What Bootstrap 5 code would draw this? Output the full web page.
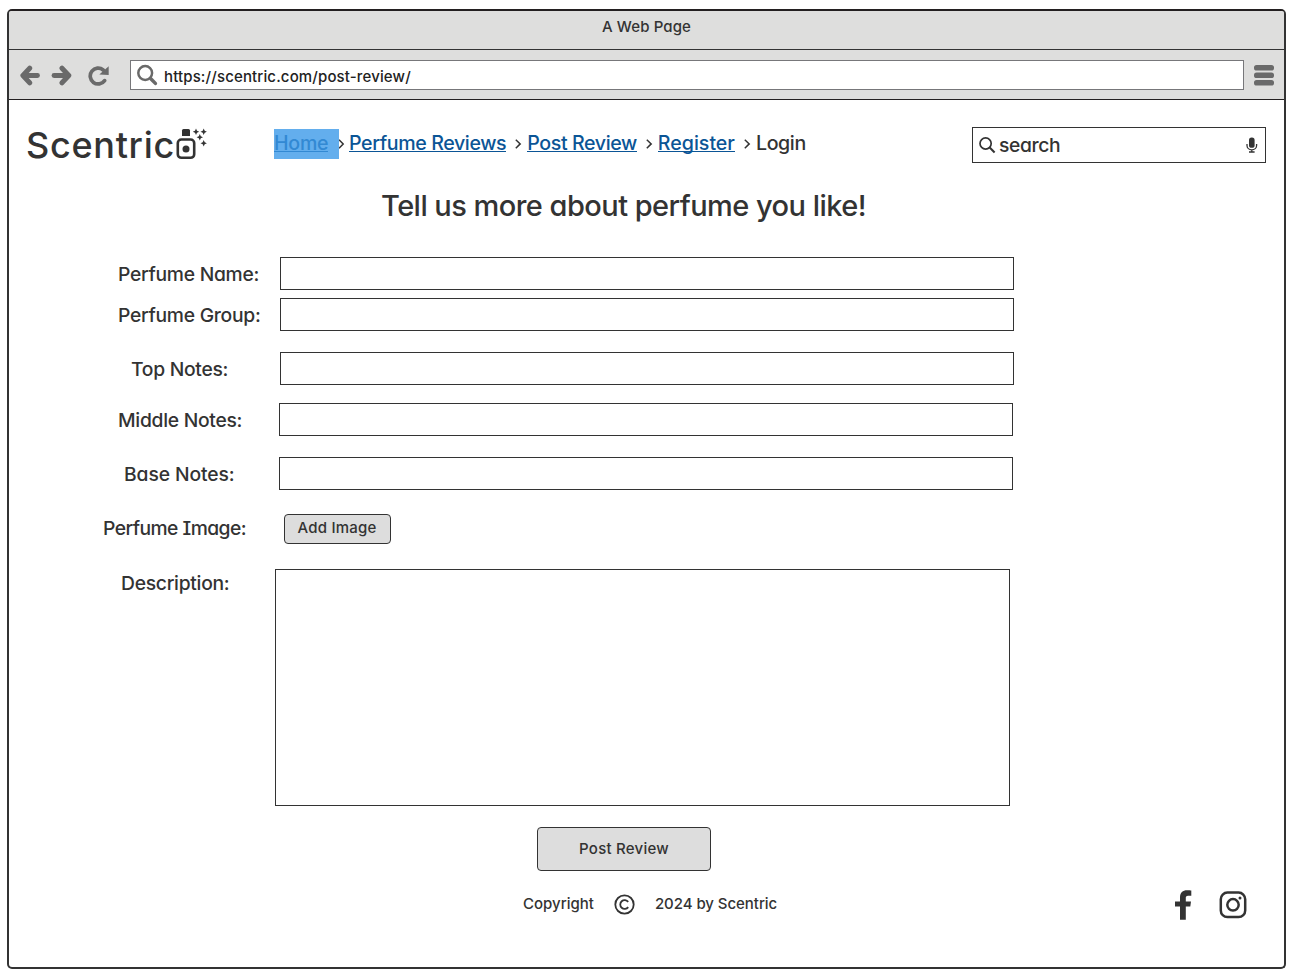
<!DOCTYPE html>
<html lang="en">
<head>
<meta charset="utf-8">
<meta name="viewport" content="width=device-width, initial-scale=1">
<title>Scentric</title>
<link href="https://cdn.jsdelivr.net/npm/bootstrap@5.3.0/dist/css/bootstrap.min.css" rel="stylesheet">
<style>
:root { --ink: #333; --frame: #231f20; --chrome: #dededd; --glyph: #6a6a6a; --blue: #0b5596; }
body { font-family: Inter, "Liberation Sans", sans-serif; font-feature-settings: "cv11", "cv08"; font-weight: 450; color: var(--ink); background: #fff; overflow: hidden; }
svg { display: block; flex: none; }
.window-frame { margin: 9px 6px 0 7px; height: 960px; border: 2px solid var(--ink); border-top-color: var(--frame); border-radius: 5px; overflow: hidden; }

/* browser chrome */
.title-bar { height: 39px; background: var(--chrome); border-bottom: 1px solid var(--ink); font-size: 15px; line-height: 31px; letter-spacing: .1px; }
.tool-bar { height: 50px; background: var(--chrome); border-bottom: 1px solid var(--frame); padding: 0 10px; color: var(--glyph); }
.tool-bar > svg { margin-top: 2px; }
.nav-next { margin-left: 11px; }
.nav-reload { margin-left: 15px; }
.address { height: 30px; border: 1px solid #77777a; margin: 0 9px 0 20px; padding-left: 5px; font-size: 15px; letter-spacing: .14px; }
.address span { margin-left: 6px; line-height: 20px; padding-top: 4px; color: #222; }

/* site header */
.site-head { height: 88px; padding: 27px 18px 0; }
.logo { width: 247px; font-size: 36px; line-height: 36px; font-weight: 500; letter-spacing: .7px; }
.logo span { width: 148px; text-indent: -1px; }
.crumbs { font-size: 19.6px; line-height: 28px; margin-top: 2px; letter-spacing: -.38px; }
.crumbs a { color: var(--blue); text-decoration: none; background: linear-gradient(var(--blue), var(--blue)) 0 22px / 100% 1px no-repeat; white-space: nowrap; }
.crumbs .picked { width: 65px; height: 30px; background: #63aeed; }
.crumbs .picked a { display: inline-block; letter-spacing: -.26px; color: #3289d3; background-image: linear-gradient(#3289d3, #3289d3); }
.chev { width: 21px; padding-left: 9px; }
.picked + .chev { width: 10px; padding-left: 0; }
.searchbox { width: 294px; height: 36px; border: 1px solid var(--ink); padding: 0 7px 0 6px; font-size: 19.3px; letter-spacing: -.35px; }
.headline { font-size: 29px; line-height: 40px; margin: -2px 0 31px 372px; letter-spacing: -.54px; font-weight: 450; }

/* review form */
.field-row label { flex: none; width: 271px; font-size: 19.3px; line-height: 34px; letter-spacing: -.28px; white-space: nowrap; }
.field { width: 734px; height: 33px; border: 1px solid var(--ink); border-radius: 0; padding: 0 8px; }
.area { width: 735px; height: 237px; resize: none; }
.soft-btn { display: block; background: #ddd; border: 1px solid var(--ink); border-radius: 4px; color: var(--ink); font-size: 15px; font-weight: 450; padding: 0; }
.row-name, .row-group, .row-top, .row-middle, .row-base { height: 33px; }
.row-name label, .row-group label { padding-left: 109px; }
.row-group { margin-top: 8px; }
.row-top { margin-top: 21px; }
.row-top label { padding-left: 122px; }
.row-middle { margin-top: 18px; }
.row-middle label { width: 270px; padding-left: 109px; }
.row-base { margin-top: 21px; }
.row-base label { width: 270px; padding-left: 115px; letter-spacing: -.1px; }
.row-image { margin-top: 24px; height: 30px; }
.row-image label { width: 275px; padding-left: 94px; line-height: 28px; letter-spacing: -.55px; }
.row-image .soft-btn { width: 107px; height: 30px; line-height: 26px; padding: 0 1px 2px 0; letter-spacing: .2px; }
.row-text { margin-top: 25px; }
.row-text label { width: 266px; padding-left: 112px; line-height: 28px; }
.post-btn { width: 174px; height: 44px; margin: 21px 0 0 528px; line-height: 41px; padding-bottom: 1px; letter-spacing: .24px; }

/* footer */
.foot { font-size: 15px; line-height: 29px; letter-spacing: 0; margin-top: 18px; padding: 0 37px 0 514px; height: 33px; }
.foot .owner { margin-left: 20px; letter-spacing: -.05px; }
.foot .copy { margin: 5px 0 0 20px; }
</style>
</head>
<body>
<div class="window-frame">
  <div class="title-bar text-center">A Web Page</div>
  <div class="tool-bar d-flex align-items-center">
    <svg width="21" height="21" viewBox="0 0 21 21" fill="none" stroke="currentColor" stroke-linecap="round" stroke-linejoin="round"><path d="M10.700 3.200 3.900 10.500l6.800 7.300" stroke-width="5"/><path d="M5.500 10.500h13" stroke-width="4.800"/></svg>
    <svg class="nav-next" width="21" height="21" viewBox="0 0 21 21" fill="none" stroke="currentColor" stroke-linecap="round" stroke-linejoin="round"><path d="m11 3.200 6.800 7.300-6.800 7.300" stroke-width="5"/><path d="M16 10.500H3" stroke-width="4.800"/></svg>
    <svg class="nav-reload" width="23" height="21" viewBox="0 0 23 21"><path d="M17.600 15.600a7.900 7.900 0 1 1-1.400-10.600" fill="none" stroke="currentColor" stroke-width="3.700" stroke-linecap="round"/><path d="M21.700 1.200v8.800l-9.400-.6z" fill="currentColor"/></svg>
    <div class="address bg-white flex-grow-1 d-flex align-items-center">
      <svg width="22" height="22" viewBox="0 0 22 22" fill="none" stroke="#6a6a6a"><circle cx="9.200" cy="9" r="6.900" stroke-width="2.500"/><path d="m14.800 14.700 4.600 4.700" stroke-width="3.500" stroke-linecap="round"/></svg>
      <span>https://scentric.com/post-review/</span>
    </div>
    <svg width="21" height="21" viewBox="0 0 21 21" fill="currentColor"><rect x="1" y="0" width="20" height="5.500" rx="2.600"/><rect x="1" y="7.500" width="20" height="5.500" rx="2.600"/><rect x="1" y="15" width="20" height="5.500" rx="2.600"/></svg>
  </div>

  <header class="site-head d-flex align-items-start">
    <div class="logo d-flex"><span>Scentric</span>
      <svg width="33" height="33" viewBox="0 0 33 33" fill="#333"><path d="M7 9V3.500Q7 2 8.500 2h5Q15 2 15 3.500V9z"/><rect x="2.800" y="12.500" width="16.400" height="18.300" rx="3.600" fill="none" stroke="#333" stroke-width="2.600"/><circle cx="11" cy="22" r="3.500"/><path id="spark" d="M21 1.600l1 2.200 2.200 1-2.200 1-1 2.200-1-2.200-2.200-1 2.200-1z"/><use href="#spark" x="7.700"/><use href="#spark" x="3.800" y="5.500"/><use href="#spark" x="7.700" y="11.500"/></svg>
    </div>
    <nav class="crumbs d-flex flex-grow-1">
      <div class="picked"><a href="#">Home</a></div>
      <span class="chev"><svg width="6" height="28" viewBox="0 0 6 28" fill="none" stroke="#333" stroke-width="1.500"><path d="m0 10.700 4.200 4.200L0 19.200"/></svg></span>
      <a href="#">Perfume Reviews</a>
      <span class="chev"><svg width="7" height="28" viewBox="0 0 7 28" fill="none" stroke="#333" stroke-width="1.500"><path d="m.8 10.700 4.400 4.200L.8 19.200"/></svg></span>
      <a href="#" style="letter-spacing:-.4px">Post Review</a>
      <span class="chev"><svg width="7" height="28" viewBox="0 0 7 28" fill="none" stroke="#333" stroke-width="1.500"><path d="m.8 10.700 4.400 4.200L.8 19.200"/></svg></span>
      <a href="#" style="letter-spacing:0">Register</a>
      <span class="chev"><svg width="7" height="28" viewBox="0 0 7 28" fill="none" stroke="#333" stroke-width="1.500"><path d="m.8 10.700 4.400 4.200L.8 19.200"/></svg></span>
      <span>Login</span>
    </nav>
    <div class="searchbox d-flex align-items-center">
      <svg width="17" height="17" viewBox="0 0 17 17" fill="none" stroke="#333"><circle cx="6.600" cy="6.500" r="5.600" stroke-width="1.700"/><path d="m10.700 10.600 4.900 4.800" stroke-width="2.100"/></svg>
      <span style="margin-left:3px">search</span>
      <svg class="ms-auto" width="12" height="17" viewBox="0 0 12 17"><rect x="3" y=".5" width="5.600" height="10.300" rx="2.600" fill="#333"/><path d="M1 7v1.500a4.800 4.400 0 0 0 9.600 0V7M5.800 13v2M3 15h5.600" fill="none" stroke="#333" stroke-width="1.300"/></svg>
    </div>
  </header>

  <h1 class="headline">Tell us more about perfume you like!</h1>

  <form>
    <div class="field-row row-name d-flex"><label for="f1">Perfume Name:</label><input id="f1" class="field" type="text"></div>
    <div class="field-row row-group d-flex"><label for="f2">Perfume Group:</label><input id="f2" class="field" type="text"></div>
    <div class="field-row row-top d-flex"><label for="f3">Top Notes:</label><input id="f3" class="field" type="text"></div>
    <div class="field-row row-middle d-flex"><label for="f4">Middle Notes:</label><input id="f4" class="field" type="text"></div>
    <div class="field-row row-base d-flex"><label for="f5">Base Notes:</label><input id="f5" class="field" type="text"></div>
    <div class="field-row row-image d-flex"><label>Perfume Image:</label><button type="button" class="btn soft-btn">Add Image</button></div>
    <div class="field-row row-text d-flex"><label for="f6">Description:</label><textarea id="f6" class="field area"></textarea></div>
    <button type="button" class="btn soft-btn post-btn">Post Review</button>
  </form>

  <footer class="foot d-flex align-items-start">
    <span>Copyright</span>
    <svg class="copy" width="21" height="21" viewBox="0 0 21 21" fill="none" stroke="#333"><circle cx="10.500" cy="10.500" r="9.200" stroke-width="1.800"/><path d="M14.200 7.900a4.400 4.400 0 1 0 0 5.200" stroke-width="1.800"/></svg>
    <span class="owner">2024 by Scentric</span>
    <svg class="ms-auto" style="margin-top:1px" width="18" height="31" viewBox="0 0 18 31" fill="#333"><path d="M17.300 1v4.800h-3.200c-1.900 0-2.300.9-2.300 2.300v3.300h5.200l-.7 5.100h-4.500v13.200H6V16.500H1v-5.100h5V7.300C6 2.700 8.800.2 13 .2c2 0 3.700.2 4.300.4z"/></svg>
    <svg style="margin:2px 0 0 27px" width="28" height="28" viewBox="0 0 28 28" fill="none" stroke="#333"><rect x="1.800" y="1.600" width="24.400" height="24.400" rx="6.600" stroke-width="2.500"/><circle cx="14" cy="13.800" r="5.700" stroke-width="2.500"/><circle cx="21" cy="7" r="1.500" fill="#333" stroke="none"/></svg>
  </footer>
</div>
<script src="https://cdn.jsdelivr.net/npm/bootstrap@5.3.0/dist/js/bootstrap.bundle.min.js"></script>
</body>
</html>
